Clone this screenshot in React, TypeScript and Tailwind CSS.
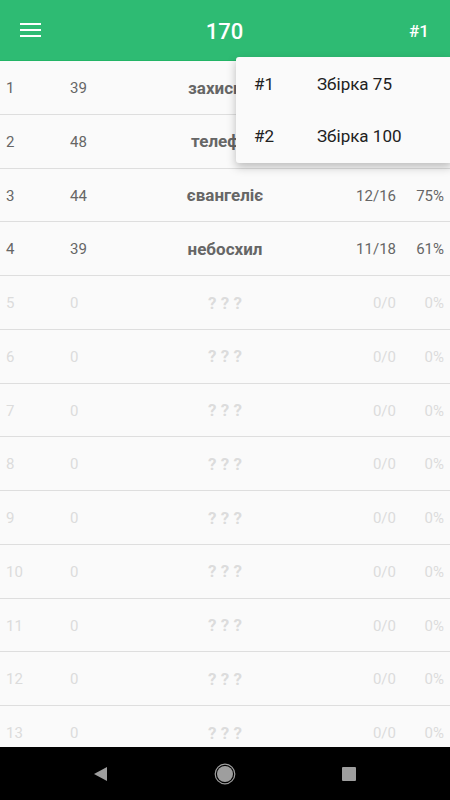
type Row = { rank: number; score: number; word: string; ratio: string; pct: string };

const rows: Row[] = [
  { rank: 1, score: 39, word: 'захисник', ratio: '14/19', pct: '73%' },
  { rank: 2, score: 48, word: 'телефон', ratio: '15/20', pct: '75%' },
  { rank: 3, score: 44, word: 'євангеліє', ratio: '12/16', pct: '75%' },
  { rank: 4, score: 39, word: 'небосхил', ratio: '11/18', pct: '61%' },
  ...Array.from({ length: 9 }, (_, i) => ({ rank: i + 5, score: 0, word: '? ? ?', ratio: '0/0', pct: '0%' })),
];

const App = () => {
  return (
    <div className="relative h-[800px] w-[450px] overflow-hidden bg-[#fafafa] font-['Roboto',sans-serif]">
      {/* toolbar */}
      <div className="flex h-[61px] items-center justify-between border-b border-[#22b466] bg-[#2ebb73] pl-5 pr-[21px] pt-[3px] text-white">
        <svg width="21" height="14" viewBox="0 0 21 14" className="mb-[3px]">
          <rect x="0" y="0" width="21" height="2" fill="white" />
          <rect x="0" y="6" width="21" height="2" fill="white" />
          <rect x="0" y="12" width="21" height="2" fill="white" />
        </svg>
        <span className="text-[22px] font-medium">170</span>
        <span className="w-[21px] text-right text-[17px] font-medium">#1</span>
      </div>

      {/* table */}
      <div className="flex flex-col">
        {rows.map(r => {
          const empty = r.score === 0;
          return (
            <div
              key={r.rank}
              className={`flex h-[53.75px] shrink-0 items-center border-b border-[#dedede] pt-[2px] text-[15px] ${empty ? 'text-[#dcdcdc]' : 'text-[#666]'}`}
            >
              <span className="w-[70px] pl-[6px]">{r.rank}</span>
              <span className="w-[60px]">{r.score}</span>
              <span className="flex-1 text-center text-[17px] font-bold">{r.word}</span>
              <span className="w-[76px] text-right">{r.ratio}</span>
              <span className="w-[54px] pr-[6px] text-right">{r.pct}</span>
            </div>
          );
        })}
      </div>

      {/* dropdown menu */}
      <div className="absolute left-[236px] top-[57px] w-[216px] rounded-[3px] bg-[#fafafa] pt-[2px] shadow-[0_4px_10px_rgba(0,0,0,0.25)]">
        {[
          ['#1', 'Збірка 75'],
          ['#2', 'Збірка 100'],
        ].map(([n, t]) => (
          <div key={n} className="flex h-[52px] items-center text-[17px] text-[#212121]">
            <span className="w-[81px] pl-[18px]">{n}</span>
            <span>{t}</span>
          </div>
        ))}
      </div>

      {/* nav bar */}
      <div className="absolute bottom-0 left-0 flex h-[53px] w-full items-center justify-center gap-[106px] bg-black">
        <svg width="14" height="14" viewBox="0 0 14 14">
          <path d="M13 0 L13 14 L0 7 Z" fill="#9e9e9e" />
        </svg>
        <svg width="22" height="22" viewBox="0 0 22 22">
          <circle cx="11" cy="11" r="9.8" fill="none" stroke="#9e9e9e" strokeWidth="1.2" />
          <circle cx="11" cy="11" r="8" fill="#9e9e9e" />
        </svg>
        <svg width="14" height="14" viewBox="0 0 14 14">
          <rect x="0" y="0" width="14" height="14" rx="1" fill="#9e9e9e" />
        </svg>
      </div>
    </div>
  );
};

export default App;
